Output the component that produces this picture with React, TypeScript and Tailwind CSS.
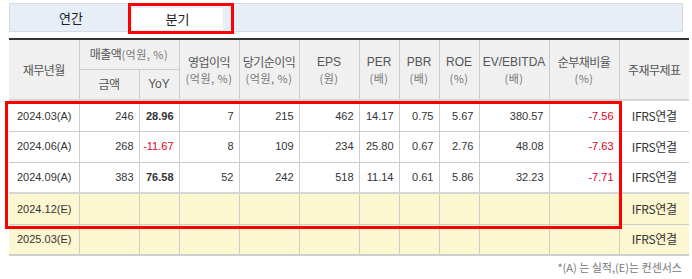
import React from 'react';

type Row = {
  date: string;
  est?: boolean;
  vals: (string | null)[];
};

const rows: Row[] = [
  { date: '2024.03(A)', vals: ['246', '28.96', '7', '215', '462', '14.17', '0.75', '5.67', '380.57', '-7.56'] },
  { date: '2024.06(A)', vals: ['268', '-11.67', '8', '109', '234', '25.80', '0.67', '2.76', '48.08', '-7.63'] },
  { date: '2024.09(A)', vals: ['383', '76.58', '52', '242', '518', '11.14', '0.61', '5.86', '32.23', '-7.71'] },
  { date: '2024.12(E)', est: true, vals: Array(10).fill(null) },
  { date: '2025.03(E)', est: true, vals: Array(10).fill(null) },
];

const widths = [70, 60, 40, 60, 60, 60, 40, 40, 40, 70, 70, 70];

const th = 'border-l border-[#cccccc] font-normal align-middle text-center leading-[16px] whitespace-nowrap';
const unit = 'text-[#777] text-[11px] tracking-[0.5px]';
const eng = "font-['Liberation_Sans',sans-serif] text-[12px] tracking-normal";

const App = () => {
  return (
    <div className="relative w-[692px] h-[279px] bg-white text-[#333] font-['Noto_Sans_CJK_KR','Liberation_Sans',sans-serif]">
      {/* Tabs */}
      <div className="mx-[9px] pt-[3px]">
        <div className="flex h-[29px] bg-[#e8eef8] border border-[#d3dbe6]">
          <div className="w-[122px] flex items-center justify-center text-[13px] text-[#222]">연간</div>
          <div className="w-[91px] mt-[4px] mb-[1px] bg-white flex items-center justify-center text-[13px] text-[#222]">분기</div>
        </div>
      </div>

      {/* Table */}
      <div className="mx-[9px] mt-[6px]">
        <table className="table-fixed border-collapse w-[680px] border-t-2 border-[#333]">
          <colgroup>
            {widths.map((w, i) => (
              <col key={i} style={{ width: w }} />
            ))}
          </colgroup>
          <thead className="bg-[#f0f0f0] text-[#555] text-[12px] tracking-[-0.5px]">
            <tr className="h-[30px]">
              <th rowSpan={2} className={th + ' border-l-0 border-b-2 border-b-[#d6d6d6]'}>재무년월</th>
              <th colSpan={2} className={th + ' border-b border-b-[#cccccc]'}>
                매출액<span className={unit}>(억원, %)</span>
              </th>
              <th rowSpan={2} className={th + ' border-b-2 border-b-[#d6d6d6]'}>
                영업이익<br /><span className={unit}>(억원, %)</span>
              </th>
              <th rowSpan={2} className={th + ' border-b-2 border-b-[#d6d6d6]'}>
                당기순이익<br /><span className={unit}>(억원, %)</span>
              </th>
              <th rowSpan={2} className={th + ' border-b-2 border-b-[#d6d6d6]'}>
                <span className={eng}>EPS</span><br /><span className={unit}>(원)</span>
              </th>
              <th rowSpan={2} className={th + ' border-b-2 border-b-[#d6d6d6]'}>
                <span className={eng}>PER</span><br /><span className={unit}>(배)</span>
              </th>
              <th rowSpan={2} className={th + ' border-b-2 border-b-[#d6d6d6]'}>
                <span className={eng}>PBR</span><br /><span className={unit}>(배)</span>
              </th>
              <th rowSpan={2} className={th + ' border-b-2 border-b-[#d6d6d6]'}>
                <span className={eng}>ROE</span><br /><span className={unit}>(%)</span>
              </th>
              <th rowSpan={2} className={th + ' border-b-2 border-b-[#d6d6d6]'}>
                <span className={eng}>EV/EBITDA</span><br /><span className={unit}>(배)</span>
              </th>
              <th rowSpan={2} className={th + ' border-b-2 border-b-[#d6d6d6]'}>
                순부채비율<br /><span className={unit}>(%)</span>
              </th>
              <th rowSpan={2} className={th + ' border-b-2 border-b-[#d6d6d6]'}>주재무제표</th>
            </tr>
            <tr className="h-[31px]">
              <th className={th + ' border-b-2 border-b-[#d6d6d6]'}>금액</th>
              <th className={th + ' border-b-2 border-b-[#d6d6d6] ' + eng}>YoY</th>
            </tr>
          </thead>
          <tbody className="text-[11px] font-['Liberation_Sans','Noto_Sans_CJK_KR',sans-serif]">
            {rows.map((r, ri) => (
              <tr
                key={r.date}
                className={
                  'h-[31px] ' +
                  (r.est ? 'bg-[#fdf7d1] ' : 'bg-white ') +
                  (ri === 2 ? 'border-b-2 border-b-[#d6d6d6]' : ri === 4 ? 'border-b-2 border-b-[#cfcfcf]' : 'border-b border-b-[#cccccc]')
                }
              >
                <td className="pl-[8px] text-left text-[#333]">{r.date}</td>
                {r.vals.map((v, i) => {
                  const neg = v !== null && v.startsWith('-');
                  const bold = i === 1 && !neg;
                  return (
                    <td
                      key={i}
                      className={
                        'border-l border-[#cccccc] text-right pr-[5px] ' +
                        (neg ? 'text-[#e0001b] ' : 'text-[#333] ') +
                        (bold ? 'font-bold text-[#111]' : '')
                      }
                    >
                      {v}
                    </td>
                  );
                })}
                <td className="border-l border-[#cccccc] text-center text-[12px] text-[#333] font-['Noto_Sans_CJK_KR',sans-serif] tracking-[-0.3px]">
                  IFRS연결
                </td>
              </tr>
            ))}
          </tbody>
        </table>
        <div className="text-right text-[11px] text-[#777] mt-[4px] pr-[1px] leading-[14px]">*(A) 는 실적,(E)는 컨센서스</div>
      </div>

      {/* red highlight boxes */}
      <div className="absolute left-[128px] top-[3px] w-[106px] h-[31px] border-[3px] border-[#ff0000]" />
      <div className="absolute left-[5px] top-[101px] w-[617px] h-[128px] border-[3px] border-[#ff0000]" />
    </div>
  );
};

export default App;
